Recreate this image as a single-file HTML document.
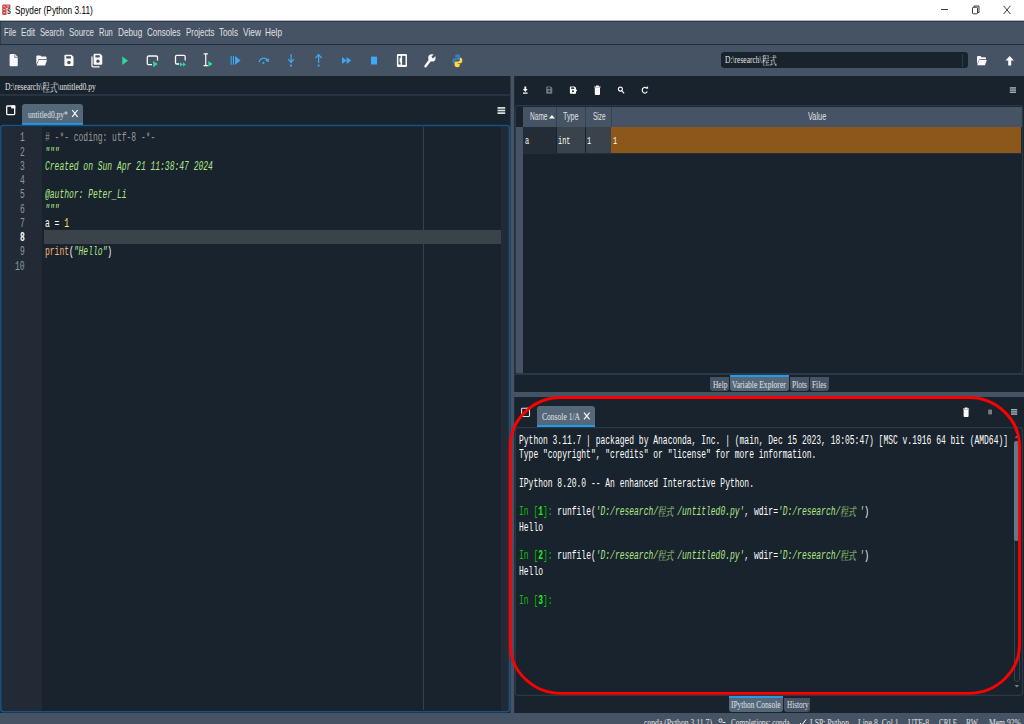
<!DOCTYPE html>
<html><head><meta charset="utf-8"><title>Spyder (Python 3.11)</title>
<style>
html,body{margin:0;padding:0;background:#19232D;overflow:hidden}
#app{position:relative;width:1024px;height:724px;overflow:hidden;background:#19232D}
#app div{position:absolute;box-sizing:border-box}
#app svg{position:absolute;overflow:visible}
.t{position:absolute;display:block;white-space:pre;transform-origin:0 0;line-height:normal}
</style></head><body><div id="app">
<div style="left:0px;top:0px;width:1024px;height:21px;background:#FFFFFF;"></div>
<div style="left:0px;top:20px;width:1024px;height:1px;background:#B4B9C0;"></div>
<div style="left:0px;top:21px;width:1024px;height:1px;background:#2C3848;"></div>
<div style="left:0px;top:22px;width:1024px;height:22px;background:#455364;"></div>
<div style="left:0px;top:44px;width:1024px;height:1px;background:#222D3A;"></div>
<div style="left:0px;top:45px;width:1024px;height:31px;background:#455364;"></div>
<div style="left:0px;top:76px;width:510px;height:637px;background:#19232D;"></div>
<div style="left:0px;top:94px;width:510px;height:2px;background:#273341;"></div>
<div style="left:514px;top:76px;width:510px;height:637px;background:#19232D;"></div>
<div style="left:0px;top:712.7px;width:1024px;height:11.3px;background:#455364;"></div>
<div style="left:22px;top:104px;width:61px;height:21px;background:#54687A;border-radius:3px 3px 0 0"></div>
<div style="left:22px;top:123px;width:61px;height:2px;background:#259AE9;"></div>
<div style="left:2px;top:126.5px;width:40px;height:584px;background:#222B35;"></div>
<div style="left:501px;top:126.5px;width:7.7px;height:584px;background:#222B35;"></div>
<div style="left:423px;top:127px;width:1px;height:583px;background:#33404D;"></div>
<div style="left:44px;top:229.5px;width:456.5px;height:14.25px;background:#3A424A;"></div>
<div style="left:516px;top:107px;width:7px;height:20px;background:#19232D;"></div>
<div style="left:523px;top:107px;width:498.8px;height:20px;background:#455364;"></div>
<div style="left:516px;top:127px;width:7px;height:246px;background:#455364;"></div>
<div style="left:556px;top:107px;width:1px;height:20px;background:#37424F;"></div>
<div style="left:585px;top:107px;width:1px;height:20px;background:#37424F;"></div>
<div style="left:611px;top:107px;width:1px;height:20px;background:#37424F;"></div>
<div style="left:523px;top:127.2px;width:32.5px;height:25.4px;background:#242C38;"></div>
<div style="left:557px;top:127.2px;width:28px;height:25.4px;background:#3A424B;"></div>
<div style="left:586.2px;top:127.2px;width:24.8px;height:25.4px;background:#3A424B;"></div>
<div style="left:611.2px;top:127.2px;width:410.2px;height:25.4px;background:#8B571A;"></div>
<div style="left:523px;top:152.6px;width:498.8px;height:1px;background:#232E3A;"></div>
<div style="left:514px;top:374px;width:510px;height:1px;background:#2B3846;"></div>
<div style="left:710.3px;top:377px;width:18.700000000000045px;height:14px;background:#455364;border-radius:0 0 3px 3px"></div>
<div style="left:730.2px;top:375px;width:58.549999999999955px;height:16px;background:#54687A;border-radius:0 0 3px 3px"></div>
<div style="left:730.2px;top:375px;width:58.549999999999955px;height:2px;background:#259AE9;"></div>
<div style="left:790px;top:377px;width:19px;height:14px;background:#455364;border-radius:0 0 3px 3px"></div>
<div style="left:810.3px;top:377px;width:18.450000000000045px;height:14px;background:#455364;border-radius:0 0 3px 3px"></div>
<div style="left:514px;top:392px;width:510px;height:4.5px;background:#455364;"></div>
<div style="left:537.25px;top:406.25px;width:57.5px;height:21px;background:#54687A;border-radius:3px 3px 0 0"></div>
<div style="left:537.25px;top:425px;width:57.5px;height:2px;background:#259AE9;"></div>
<div style="left:1013.5px;top:441px;width:6px;height:241px;background:#19232D;border:1px solid #33404D;border-radius:3px"></div>
<div style="left:1014px;top:441px;width:5px;height:100px;background:#60798B;border-radius:2px"></div>
<div style="left:728.5px;top:695.5px;width:54.5px;height:16.0px;background:#54687A;border-radius:0 0 3px 3px"></div>
<div style="left:728.5px;top:695.5px;width:54.5px;height:2px;background:#259AE9;"></div>
<div style="left:784.4px;top:697.5px;width:25.899999999999977px;height:14.0px;background:#455364;border-radius:0 0 3px 3px"></div>
<div style="left:720.6px;top:52px;width:247.8px;height:16px;background:#19232D;border-radius:3px"></div>
<div style="left:961.5px;top:53.5px;width:1px;height:13px;background:#2E3B49;"></div>
<svg style="left:0;top:0" width="1024" height="724" viewBox="0 0 1024 724"><rect x="510.45" y="76" width="3.75" height="637" fill="#455364"/><rect x="0" y="21.5" width="0.8" height="23" fill="#2C3848"/></svg>
<svg style="left:930px;top:0" width="94" height="20" viewBox="0 0 94 20"><g stroke="#3C3C3C" stroke-width="1" fill="none"><path d="M11 9.5h7"/><rect x="42.5" y="7.3" width="5" height="6.5" rx="0.8"/><path d="M44 7.3v-1.3h5v6.5h-1.5"/><path d="M73.6 5.8l6.8 8.2M80.4 5.8l-6.8 8.2"/></g></svg>
<svg style="left:0;top:0" width="1024" height="724" viewBox="0 0 1024 724"><rect x="0.8" y="125.6" width="508.65" height="586.1" rx="2.5" fill="none" stroke="#1A5284" stroke-width="1.5"/><rect x="515.3" y="105.7" width="507.2" height="268" rx="2.5" fill="none" stroke="#2B3846" stroke-width="1.3"/><rect x="515.3" y="427.6" width="507.2" height="267.7" rx="2.5" fill="none" stroke="#2B3846" stroke-width="1.3"/></svg>
<svg style="left:0;top:0" width="1024" height="724" viewBox="0 0 1024 724"><path d="M10.6 54.1h4.4l2.75 3v8.1a1 1 0 0 1-1 1h-6.15a1 1 0 0 1-1-1v-10.1a1 1 0 0 1 1-1z" fill="#FAFAFA"/><path d="M14.7 54.4v3h2.9" fill="none" stroke="#455364" stroke-width="0.7"/><path d="M36.3 56.4a1 1 0 0 1 1-1h3l1 1.2h4.2a1 1 0 0 1 1 1v1.3h-7.6l-2.6 5.6z" fill="#FAFAFA"/><path d="M38.9 59.7h8.2l-2 5.7h-8.5z" fill="#FAFAFA"/><path d="M65.4 54.75h6.0l2.1 2.1v8.15a1 1 0 0 1-1 1h-7.1a1 1 0 0 1-1-1v-9.25a1 1 0 0 1 1-1z" fill="#FAFAFA"/><rect x="66.2" y="56.25" width="4.8" height="2.25" fill="#455364"/><circle cx="68.95" cy="62.40" r="1.73" fill="#455364"/><path d="M92 56.6v9.2a1 1 0 0 0 1 1h6.6" fill="none" stroke="#FAFAFA" stroke-width="1.3"/><path d="M94.6 53.75h5.550000000000001l2.1 2.1v7.800000000000001a1 1 0 0 1-1 1h-6.65a1 1 0 0 1-1-1v-8.9a1 1 0 0 1 1-1z" fill="#FAFAFA"/><rect x="95.39999999999999" y="55.25" width="4.3500000000000005" height="2.18" fill="#455364"/><circle cx="97.925" cy="61.16" r="1.64" fill="#455364"/><path d="M122.25 56.5L128.1 60.7L122.25 64.9z" fill="#2FD8A3"/><path d="M152 64.6h-3.4a1.3 1.3 0 0 1-1.3-1.3v-6a1.3 1.3 0 0 1 1.3-1.3h7.6a1.3 1.3 0 0 1 1.3 1.3v3.2" fill="none" stroke="#FAFAFA" stroke-width="1.3"/><path d="M153.2 60.9L157.8 64.1L153.2 67.3z" fill="#2FD8A3"/><path d="M179.2 64h-2.4a1.3 1.3 0 0 1-1.3-1.3v-6a1.3 1.3 0 0 1 1.3-1.3h7.1a1.3 1.3 0 0 1 1.3 1.3v3.8" fill="none" stroke="#FAFAFA" stroke-width="1.3"/><path d="M180 62.2L183 64.4L180 66.6zM183 62.2L186 64.4L183 66.6z" fill="#2FD8A3"/><path d="M203.6 53.9h4.3M203.6 65.7h4.3M205.75 53.9v11.8" fill="none" stroke="#FAFAFA" stroke-width="1.2"/><path d="M208.3 61L212.7 63.9L208.3 66.8z" fill="#2FD8A3"/><path d="M230.6 56h1.1v8.8h-1.1zM232.9 56h1.1v8.8h-1.1zM235.1 56L240.6 60.4L235.1 64.8z" fill="#3FA9F5"/><path d="M259.2 62.2a4.3 4.3 0 0 1 8.3-1.2" fill="none" stroke="#3FA9F5" stroke-width="1.3"/><path d="M265 60.6l3.8 1.6l0.2-4z" fill="#3FA9F5"/><circle cx="263.4" cy="63" r="1.1" fill="#3FA9F5"/><path d="M291.1 54v8M288.2 59.2l2.9 3.3l2.9-3.3" fill="none" stroke="#3FA9F5" stroke-width="1.2"/><circle cx="291.1" cy="65.6" r="1.1" fill="#3FA9F5"/><path d="M318.6 55v8M315.5 58l3.1-3.3l3.1 3.3" fill="none" stroke="#3FA9F5" stroke-width="1.2"/><circle cx="318.6" cy="65.6" r="1.1" fill="#3FA9F5"/><path d="M342 57L346.6 60.5L342 64zM346.6 57L351.2 60.5L346.6 64z" fill="#3FA9F5"/><rect x="371" y="56.6" width="6" height="7.9" fill="#3FA9F5"/><rect x="396.9" y="53.9" width="10.1" height="13.1" rx="1.2" fill="#FAFAFA"/><rect x="402.1" y="55.9" width="3.4" height="9" fill="#455364"/><path d="M398.4 56h2.2v2h-1v4.6h1v2h-2.2z" fill="#455364"/><path d="M425.5 66.2l5.6-7.4" stroke="#FAFAFA" stroke-width="2.5" stroke-linecap="round" fill="none"/><circle cx="431.9" cy="57.9" r="3.7" fill="#FAFAFA"/><path d="M432.2 57.6l4.5-4.5" stroke="#455364" stroke-width="2.3" fill="none"/><g transform="translate(457.4 0) scale(0.82 1) translate(-457.4 0)"><path d="M457.2 54.2c-2.2 0-2.6 1-2.6 1.9v1.5h2.7v0.6h-3.9c-1.2 0-2 1-2 2.7s0.8 2.7 2 2.7h1v-1.6c0-1.1 0.9-2 2-2h2.8c0.9 0 1.6-0.7 1.6-1.6v-2.3c0-0.9-0.9-1.9-3.6-1.9z" fill="#3C7EBB"/><path d="M457.6 67.2c2.2 0 2.6-1 2.6-1.9v-1.5h-2.7v-0.6h3.9c1.2 0 2-1 2-2.7s-0.8-2.7-2-2.7h-1v1.6c0 1.1-0.9 2-2 2h-2.8c-0.9 0-1.6 0.7-1.6 1.6v2.3c0 0.9 0.9 1.9 3.6 1.9z" fill="#FFD845"/></g><g transform="translate(0.8 0.8)"><path d="M976.2 56.2a0.9 0.9 0 0 1 0.9-0.9h2.6l0.9 1.1h3.7a0.9 0.9 0 0 1 0.9 0.9v1.1h-6.6l-2.4 5z" fill="#FAFAFA"/><path d="M978.5 59.2h7.5l-1.8 5.3h-7.8z" fill="#FAFAFA"/></g><path d="M1009.7 56l4.2 4.5h-2.7v5h-3v-5h-2.7z" fill="#FAFAFA"/><path d="M524.4 86.4h1.8v2.6h1.5l-2.4 2.9l-2.4-2.9h1.5zM523 92.6h4.6v1.1h-4.6z" fill="#FAFAFA"/><path d="M546.8000000000001 86.4h4.1l1.4 1.4v5.3a0.6 0.6 0 0 1-0.6 0.6h-4.8999999999999995a0.6 0.6 0 0 1-0.6-0.6v-6.1a0.6 0.6 0 0 1 0.6-0.6z" fill="#6F7A85"/><rect x="547.5" y="87.4" width="2.8999999999999995" height="1.5" fill="#19232D"/><circle cx="549.25" cy="91.36" r="1" fill="#19232D"/><path d="M570.5 86.4h4.1l1.4 1.4v5.3a0.6 0.6 0 0 1-0.6 0.6h-4.8999999999999995a0.6 0.6 0 0 1-0.6-0.6v-6.1a0.6 0.6 0 0 1 0.6-0.6z" fill="#FAFAFA"/><rect x="571.1999999999999" y="87.4" width="2.8999999999999995" height="1.5" fill="#19232D"/><circle cx="572.9499999999999" cy="91.36" r="1" fill="#19232D"/><path d="M573.6 93.8l3.2-4" stroke="#FAFAFA" stroke-width="1.1"/><path d="M594.2 86.5h6.4v0.9h-6.4zM596 85.4h2.8v1h-2.8zM594.8 87.7h5.2v6.4a0.9 0.9 0 0 1-0.9 0.9h-3.4a0.9 0.9 0 0 1-0.9-0.9z" fill="#FAFAFA"/><circle cx="620.4" cy="89.1" r="2" fill="none" stroke="#FAFAFA" stroke-width="1.1"/><path d="M621.9 90.8l2.2 2.6" stroke="#FAFAFA" stroke-width="1.2"/><path d="M647.3 91.6a2.7 2.9 0 1 1-0.6-3.6" fill="none" stroke="#FAFAFA" stroke-width="1.2"/><path d="M645.6 88.5l2.6 0.2l-0.2-2.6z" fill="#FAFAFA"/><rect x="497.5" y="107.00" width="7.7" height="1.75" fill="#DADCDE"/><rect x="497.5" y="109.62" width="7.7" height="1.75" fill="#DADCDE"/><rect x="497.5" y="112.25" width="7.7" height="1.75" fill="#DADCDE"/><rect x="1009.8" y="87.20" width="6.2" height="1.45" fill="#A9AEB4"/><rect x="1009.8" y="89.38" width="6.2" height="1.45" fill="#A9AEB4"/><rect x="1009.8" y="91.55" width="6.2" height="1.45" fill="#A9AEB4"/><rect x="1011" y="409.00" width="6.2" height="1.45" fill="#A9AEB4"/><rect x="1011" y="411.18" width="6.2" height="1.45" fill="#A9AEB4"/><rect x="1011" y="413.35" width="6.2" height="1.45" fill="#A9AEB4"/><rect x="6.7" y="106" width="8" height="8.6" rx="0.8" fill="none" stroke="#FAFAFA" stroke-width="1.3"/><rect x="11.2" y="105.4" width="4.1" height="3" fill="#FAFAFA"/><rect x="521.6" y="408.3" width="7.9" height="8.2" rx="0.8" fill="none" stroke="#DCDEE0" stroke-width="1.1"/><rect x="526" y="407.8" width="4" height="2" fill="#DCDEE0"/><path d="M963 408.6h6.2v0.9h-6.2zM964.8 407.5h2.7v1h-2.7zM963.6 409.8h5v6.3a0.9 0.9 0 0 1-0.9 0.9h-3.2a0.9 0.9 0 0 1-0.9-0.9z" fill="#FAFAFA"/><rect x="988.2" y="409.6" width="3.8" height="4.8" fill="#7A7C7F"/><path d="M72.2 110l5.4 6.8M77.6 110l-5.4 6.8" stroke="#FAFAFA" stroke-width="1.2" fill="none"/><path d="M584 412.6l5.6 6.8M589.6 412.6l-5.6 6.8" stroke="#FAFAFA" stroke-width="1.2" fill="none"/><path d="M548.8 118.6l3.1-3.7l3.1 3.7z" fill="#FAFAFA"/><path d="M1014.7 437.8l1.8-2l1.8 2z" fill="#74808D"/><path d="M1014.5 685l2.3 2.6l2.3-2.6z" fill="#74808D"/><circle cx="720.5" cy="720.5" r="1.6" fill="none" stroke="#FAFAFA" stroke-width="0.9"/><path d="M722.5 722.5h3" stroke="#FAFAFA" stroke-width="0.9"/><path d="M800 723l2 2l4-5.5" stroke="#FAFAFA" stroke-width="1" fill="none"/></svg>
<svg style="left:0;top:0" width="20" height="20" viewBox="0 0 20 20"><path d="M2.2 5.6a1.2 1.2 0 0 1 1.2-1.2h5.8a1.2 1.2 0 0 1 1.2 1.2v2.5h-3.9v6.9h-3.1a1.2 1.2 0 0 1-1.2-1.2z" fill="#CB4A4D"/><path d="M3.3 6.3h1.6M6.6 6.1h2.4M3.3 9.5h2M3.3 12.7h2M5.2 7.4l1.2 1.2M8.4 7.2l-1 .8" stroke="#F3D3D3" stroke-width="0.9"/></svg>
<span class="t" style="left:14.70px;top:3.75px;font:11px 'Liberation Sans', sans-serif;color:#000000;transform:scaleX(0.7543);">Spyder (Python 3.11)</span>
<span class="t" style="left:4.25px;top:26.25px;font:11px 'Liberation Sans', sans-serif;color:#E0E1E3;transform:scaleX(0.6907);">File</span>
<span class="t" style="left:21.00px;top:26.25px;font:11px 'Liberation Sans', sans-serif;color:#E0E1E3;transform:scaleX(0.7381);">Edit</span>
<span class="t" style="left:40.00px;top:26.25px;font:11px 'Liberation Sans', sans-serif;color:#E0E1E3;transform:scaleX(0.6885);">Search</span>
<span class="t" style="left:69.25px;top:26.25px;font:11px 'Liberation Sans', sans-serif;color:#E0E1E3;transform:scaleX(0.7172);">Source</span>
<span class="t" style="left:99.25px;top:26.25px;font:11px 'Liberation Sans', sans-serif;color:#E0E1E3;transform:scaleX(0.6811);">Run</span>
<span class="t" style="left:118.25px;top:26.25px;font:11px 'Liberation Sans', sans-serif;color:#E0E1E3;transform:scaleX(0.7480);">Debug</span>
<span class="t" style="left:147.00px;top:26.25px;font:11px 'Liberation Sans', sans-serif;color:#E0E1E3;transform:scaleX(0.7305);">Consoles</span>
<span class="t" style="left:185.50px;top:26.25px;font:11px 'Liberation Sans', sans-serif;color:#E0E1E3;transform:scaleX(0.7170);">Projects</span>
<span class="t" style="left:219.00px;top:26.25px;font:11px 'Liberation Sans', sans-serif;color:#E0E1E3;transform:scaleX(0.7397);">Tools</span>
<span class="t" style="left:242.50px;top:26.25px;font:11px 'Liberation Sans', sans-serif;color:#E0E1E3;transform:scaleX(0.7609);">View</span>
<span class="t" style="left:265.25px;top:26.25px;font:11px 'Liberation Sans', sans-serif;color:#E0E1E3;transform:scaleX(0.7514);">Help</span>
<span class="t" style="left:4.75px;top:80.00px;font:11px 'Liberation Serif', 'Noto Serif CJK SC', serif;color:#E0E1E3;transform:scaleX(0.6900);">D:\research\<span style="display:inline-block;vertical-align:-1.6px;line-height:10px">程式</span>\untitled0.py</span>
<span class="t" style="left:27.75px;top:107.50px;font:11px 'Liberation Serif', 'Noto Serif CJK SC', serif;color:#E0E1E3;transform:scaleX(0.6811);">untitled0.py*</span>
<span class="t" style="left:20.21px;top:131.25px;font:12px 'Liberation Mono', 'Noto Sans CJK SC', monospace;color:#FFFFFF;transform:scaleX(0.6658);"><span style="color:#8C98A4;">1</span></span>
<span class="t" style="left:44.50px;top:131.25px;font:12px 'Liberation Mono', 'Noto Sans CJK SC', monospace;color:#FFFFFF;transform:scaleX(0.6658);"><span style="color:#999999;"># -*- coding: utf-8 -*-</span></span>
<span class="t" style="left:20.21px;top:145.50px;font:12px 'Liberation Mono', 'Noto Sans CJK SC', monospace;color:#FFFFFF;transform:scaleX(0.6658);"><span style="color:#8C98A4;">2</span></span>
<span class="t" style="left:44.50px;top:145.50px;font:12px 'Liberation Mono', 'Noto Sans CJK SC', monospace;color:#FFFFFF;transform:scaleX(0.6658);"><span style="color:#B0E686;font-style:italic;">&quot;&quot;&quot;</span></span>
<span class="t" style="left:20.21px;top:159.75px;font:12px 'Liberation Mono', 'Noto Sans CJK SC', monospace;color:#FFFFFF;transform:scaleX(0.6658);"><span style="color:#8C98A4;">3</span></span>
<span class="t" style="left:44.50px;top:159.75px;font:12px 'Liberation Mono', 'Noto Sans CJK SC', monospace;color:#FFFFFF;transform:scaleX(0.6658);"><span style="color:#B0E686;font-style:italic;">Created on Sun Apr 21 11:38:47 2024</span></span>
<span class="t" style="left:20.21px;top:174.00px;font:12px 'Liberation Mono', 'Noto Sans CJK SC', monospace;color:#FFFFFF;transform:scaleX(0.6658);"><span style="color:#8C98A4;">4</span></span>
<span class="t" style="left:20.21px;top:188.25px;font:12px 'Liberation Mono', 'Noto Sans CJK SC', monospace;color:#FFFFFF;transform:scaleX(0.6658);"><span style="color:#8C98A4;">5</span></span>
<span class="t" style="left:44.50px;top:188.25px;font:12px 'Liberation Mono', 'Noto Sans CJK SC', monospace;color:#FFFFFF;transform:scaleX(0.6658);"><span style="color:#B0E686;font-style:italic;">@author: Peter_Li</span></span>
<span class="t" style="left:20.21px;top:202.50px;font:12px 'Liberation Mono', 'Noto Sans CJK SC', monospace;color:#FFFFFF;transform:scaleX(0.6658);"><span style="color:#8C98A4;">6</span></span>
<span class="t" style="left:44.50px;top:202.50px;font:12px 'Liberation Mono', 'Noto Sans CJK SC', monospace;color:#FFFFFF;transform:scaleX(0.6658);"><span style="color:#B0E686;font-style:italic;">&quot;&quot;&quot;</span></span>
<span class="t" style="left:20.21px;top:216.75px;font:12px 'Liberation Mono', 'Noto Sans CJK SC', monospace;color:#FFFFFF;transform:scaleX(0.6658);"><span style="color:#8C98A4;">7</span></span>
<span class="t" style="left:44.50px;top:216.75px;font:12px 'Liberation Mono', 'Noto Sans CJK SC', monospace;color:#FFFFFF;transform:scaleX(0.6658);">a = <span style="color:#FAED5C;">1</span></span>
<span class="t" style="left:20.21px;top:231.00px;font:12px 'Liberation Mono', 'Noto Sans CJK SC', monospace;color:#FFFFFF;transform:scaleX(0.6658);"><span style="color:#FFFFFF;font-weight:bold;">8</span></span>
<span class="t" style="left:20.21px;top:245.25px;font:12px 'Liberation Mono', 'Noto Sans CJK SC', monospace;color:#FFFFFF;transform:scaleX(0.6658);"><span style="color:#8C98A4;">9</span></span>
<span class="t" style="left:44.50px;top:245.25px;font:12px 'Liberation Mono', 'Noto Sans CJK SC', monospace;color:#FFFFFF;transform:scaleX(0.6658);"><span style="color:#FAB16C;">print</span>(<span style="color:#B0E686;font-style:italic;">&quot;Hello&quot;</span>)</span>
<span class="t" style="left:15.41px;top:259.50px;font:12px 'Liberation Mono', 'Noto Sans CJK SC', monospace;color:#FFFFFF;transform:scaleX(0.6658);"><span style="color:#8C98A4;">10</span></span>
<span class="t" style="left:530.00px;top:111.40px;font:10.2px 'Liberation Sans', sans-serif;color:#E0E1E3;transform:scaleX(0.6437);">Name</span>
<span class="t" style="left:563.00px;top:111.40px;font:10.2px 'Liberation Sans', sans-serif;color:#E0E1E3;transform:scaleX(0.7016);">Type</span>
<span class="t" style="left:592.50px;top:111.40px;font:10.2px 'Liberation Sans', sans-serif;color:#E0E1E3;transform:scaleX(0.6304);">Size</span>
<span class="t" style="left:807.50px;top:110.40px;font:10.5px 'Liberation Sans', sans-serif;color:#E0E1E3;transform:scaleX(0.7017);">Value</span>
<span class="t" style="left:525.00px;top:134.60px;font:10.5px 'Liberation Mono', 'Noto Sans CJK SC', monospace;color:#FFFFFF;transform:scaleX(0.6556);">a</span>
<span class="t" style="left:558.40px;top:134.60px;font:10.5px 'Liberation Mono', 'Noto Sans CJK SC', monospace;color:#FFFFFF;transform:scaleX(0.6556);">int</span>
<span class="t" style="left:587.20px;top:134.60px;font:10.5px 'Liberation Mono', 'Noto Sans CJK SC', monospace;color:#FFFFFF;transform:scaleX(0.6556);">1</span>
<span class="t" style="left:612.70px;top:134.60px;font:10.5px 'Liberation Mono', 'Noto Sans CJK SC', monospace;color:#FFFFFF;transform:scaleX(0.6556);">1</span>
<span class="t" style="left:712.60px;top:377.60px;font:11px 'Liberation Serif', 'Noto Serif CJK SC', serif;color:#E0E1E3;transform:scaleX(0.6732);">Help</span>
<span class="t" style="left:732.20px;top:377.60px;font:11px 'Liberation Serif', 'Noto Serif CJK SC', serif;color:#E0E1E3;transform:scaleX(0.6907);">Variable Explorer</span>
<span class="t" style="left:791.90px;top:377.60px;font:11px 'Liberation Serif', 'Noto Serif CJK SC', serif;color:#E0E1E3;transform:scaleX(0.6813);">Plots</span>
<span class="t" style="left:812.30px;top:377.60px;font:11px 'Liberation Serif', 'Noto Serif CJK SC', serif;color:#E0E1E3;transform:scaleX(0.6727);">Files</span>
<span class="t" style="left:541.50px;top:410.00px;font:11px 'Liberation Serif', 'Noto Serif CJK SC', serif;color:#E0E1E3;transform:scaleX(0.6870);">Console 1/A</span>
<span class="t" style="left:519.00px;top:434.25px;font:12px 'Liberation Mono', 'Noto Sans CJK SC', monospace;color:#FFFFFF;transform:scaleX(0.6658);">Python 3.11.7 | packaged by Anaconda, Inc. | (main, Dec 15 2023, 18:05:47) [MSC v.1916 64 bit (AMD64)]</span>
<span class="t" style="left:519.00px;top:448.25px;font:12px 'Liberation Mono', 'Noto Sans CJK SC', monospace;color:#FFFFFF;transform:scaleX(0.6658);">Type &quot;copyright&quot;, &quot;credits&quot; or &quot;license&quot; for more information.</span>
<span class="t" style="left:519.00px;top:476.75px;font:12px 'Liberation Mono', 'Noto Sans CJK SC', monospace;color:#FFFFFF;transform:scaleX(0.6658);">IPython 8.20.0 -- An enhanced Interactive Python.</span>
<span class="t" style="left:519.00px;top:504.50px;font:12px 'Liberation Mono', 'Noto Sans CJK SC', monospace;color:#FFFFFF;transform:scaleX(0.6658);"><span style="color:#0BBE0B;">In [</span><span style="color:#18F018;font-weight:bold;">1</span><span style="color:#0BBE0B;">]:</span> runfile(<span style="color:#B0E686;font-style:italic;">'D:/research/<span style="display:inline-block;padding:0 4.80px 0 0;transform:skewX(-11deg);vertical-align:-1px;font-family:'Noto Serif CJK SC',serif;font-weight:400;font-style:normal;opacity:0.8;font-size:12px;line-height:12px">程式</span>/untitled0.py'</span>, wdir=<span style="color:#B0E686;font-style:italic;">'D:/research/<span style="display:inline-block;padding:0 4.80px 0 0;transform:skewX(-11deg);vertical-align:-1px;font-family:'Noto Serif CJK SC',serif;font-weight:400;font-style:normal;opacity:0.8;font-size:12px;line-height:12px">程式</span>'</span>)</span>
<span class="t" style="left:519.00px;top:520.50px;font:12px 'Liberation Mono', 'Noto Sans CJK SC', monospace;color:#FFFFFF;transform:scaleX(0.6658);">Hello</span>
<span class="t" style="left:519.00px;top:549.25px;font:12px 'Liberation Mono', 'Noto Sans CJK SC', monospace;color:#FFFFFF;transform:scaleX(0.6658);"><span style="color:#0BBE0B;">In [</span><span style="color:#18F018;font-weight:bold;">2</span><span style="color:#0BBE0B;">]:</span> runfile(<span style="color:#B0E686;font-style:italic;">'D:/research/<span style="display:inline-block;padding:0 4.80px 0 0;transform:skewX(-11deg);vertical-align:-1px;font-family:'Noto Serif CJK SC',serif;font-weight:400;font-style:normal;opacity:0.8;font-size:12px;line-height:12px">程式</span>/untitled0.py'</span>, wdir=<span style="color:#B0E686;font-style:italic;">'D:/research/<span style="display:inline-block;padding:0 4.80px 0 0;transform:skewX(-11deg);vertical-align:-1px;font-family:'Noto Serif CJK SC',serif;font-weight:400;font-style:normal;opacity:0.8;font-size:12px;line-height:12px">程式</span>'</span>)</span>
<span class="t" style="left:519.00px;top:565.00px;font:12px 'Liberation Mono', 'Noto Sans CJK SC', monospace;color:#FFFFFF;transform:scaleX(0.6658);">Hello</span>
<span class="t" style="left:519.00px;top:593.75px;font:12px 'Liberation Mono', 'Noto Sans CJK SC', monospace;color:#FFFFFF;transform:scaleX(0.6658);"><span style="color:#0BBE0B;">In [</span><span style="color:#18F018;font-weight:bold;">3</span><span style="color:#0BBE0B;">]:</span></span>
<span class="t" style="left:731.00px;top:697.80px;font:11px 'Liberation Serif', 'Noto Serif CJK SC', serif;color:#E0E1E3;transform:scaleX(0.6720);">IPython Console</span>
<span class="t" style="left:786.50px;top:697.80px;font:11px 'Liberation Serif', 'Noto Serif CJK SC', serif;color:#E0E1E3;transform:scaleX(0.6515);">History</span>
<span class="t" style="left:643.75px;top:716.20px;font:11px 'Liberation Serif', 'Noto Serif CJK SC', serif;color:#E0E1E3;transform:scaleX(0.6979);">conda (Python 3.11.7)</span>
<span class="t" style="left:731.40px;top:716.20px;font:11px 'Liberation Serif', 'Noto Serif CJK SC', serif;color:#E0E1E3;transform:scaleX(0.6637);">Completions: conda</span>
<span class="t" style="left:810.00px;top:716.20px;font:11px 'Liberation Serif', 'Noto Serif CJK SC', serif;color:#E0E1E3;transform:scaleX(0.6972);">LSP: Python</span>
<span class="t" style="left:858.00px;top:716.20px;font:11px 'Liberation Serif', 'Noto Serif CJK SC', serif;color:#E0E1E3;transform:scaleX(0.6992);">Line 8, Col 1</span>
<span class="t" style="left:908.00px;top:716.20px;font:11px 'Liberation Serif', 'Noto Serif CJK SC', serif;color:#E0E1E3;transform:scaleX(0.7011);">UTF-8</span>
<span class="t" style="left:939.30px;top:716.20px;font:11px 'Liberation Serif', 'Noto Serif CJK SC', serif;color:#E0E1E3;transform:scaleX(0.6433);">CRLF</span>
<span class="t" style="left:965.60px;top:716.20px;font:11px 'Liberation Serif', 'Noto Serif CJK SC', serif;color:#E0E1E3;transform:scaleX(0.6891);">RW</span>
<span class="t" style="left:988.70px;top:716.20px;font:11px 'Liberation Serif', 'Noto Serif CJK SC', serif;color:#E0E1E3;transform:scaleX(0.6892);">Mem 92%</span>
<span class="t" style="left:6.70px;top:4.10px;font:10.5px 'Liberation Sans', sans-serif;color:#3A3A3A;transform:scaleX(0.6845);font-weight:bold;">s</span>
<span class="t" style="left:725.30px;top:53.40px;font:11px 'Liberation Serif', 'Noto Serif CJK SC', serif;color:#E0E1E3;transform:scaleX(0.6825);">D:\research\<span style="display:inline-block;vertical-align:-1.6px;line-height:10px">程式</span></span>
<svg style="left:0;top:0" width="1024" height="724" viewBox="0 0 1024 724"><rect x="510.3" y="397.5" width="509.2" height="295.9" rx="51" ry="49" fill="none" stroke="#FE0000" stroke-width="2.85"/></svg>
</div></body></html>
